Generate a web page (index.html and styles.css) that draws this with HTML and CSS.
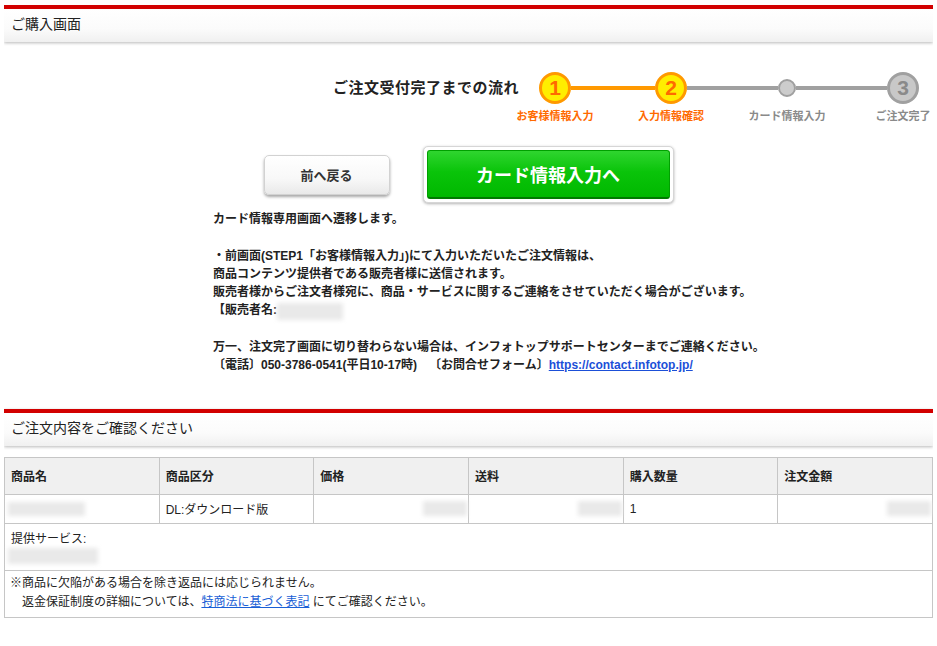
FILE: index.html
```html
<!DOCTYPE html>
<html lang="ja">
<head>
<meta charset="utf-8">
<title>ご購入画面</title>
<link rel="stylesheet" href="styles.css">
</head>
<body>
<section class="panel">
  <h2 class="panel-head">ご購入画面</h2>
  <div class="flow">
    <div class="flow-title">ご注文受付完了までの流れ</div>
    <div class="track">
      <div class="step active">
        <div class="mark"><span class="circle">1</span></div>
        <div class="label">お客様情報入力</div>
      </div>
      <div class="line line-on line-1"></div>
      <div class="step active">
        <div class="mark"><span class="circle">2</span></div>
        <div class="label">入力情報確認</div>
      </div>
      <div class="line line-2"></div>
      <div class="step step-dot">
        <div class="mark"><span class="dot"></span></div>
        <div class="label">カード情報入力</div>
      </div>
      <div class="line line-3"></div>
      <div class="step">
        <div class="mark"><span class="circle">3</span></div>
        <div class="label">ご注文完了</div>
      </div>
    </div>
  </div>

  <div class="actions">
    <button class="btn-back" type="button">前へ戻る</button>
    <button class="btn-go" type="button"><span class="btn-go-inner">カード情報入力へ</span></button>
  </div>

  <div class="notice">
    <p>カード情報専用画面へ遷移します。</p>
    <p>・前画面(STEP1「お客様情報入力」)にて入力いただいたご注文情報は、<br>商品コンテンツ提供者である販売者様に送信されます。<br>販売者様からご注文者様宛に、商品・サービスに関するご連絡をさせていただく場合がございます。<br>【販売者名:<span class="blur blur-seller"></span></p>
    <p>万一、注文完了画面に切り替わらない場合は、インフォトップサポートセンターまでご連絡ください。<br>〔電話〕050-3786-0541(平日10-17時)　<span class="form-label">〔お問合せフォーム〕</span><a class="notice-link" href="#">https://contact.infotop.jp/</a></p>
  </div>
</section>

<section class="panel panel-order">
  <h2 class="panel-head">ご注文内容をご確認ください</h2>
  <table class="order">
    <thead>
      <tr>
        <th>商品名</th>
        <th>商品区分</th>
        <th>価格</th>
        <th>送料</th>
        <th>購入数量</th>
        <th>注文金額</th>
      </tr>
    </thead>
    <tbody>
      <tr class="item-row">
        <td><span class="blur blur-name"></span></td>
        <td>DL:ダウンロード版</td>
        <td class="num-cell"><span class="blur blur-price"></span></td>
        <td class="num-cell"><span class="blur blur-ship"></span></td>
        <td>1</td>
        <td class="num-cell"><span class="blur blur-total"></span></td>
      </tr>
      <tr class="service-row">
        <td colspan="6">提供サービス:<span class="blur blur-service"></span></td>
      </tr>
      <tr class="note-row">
        <td colspan="6">※商品に欠陥がある場合を除き返品には応じられません。<br>　返金保証制度の詳細については、<a class="law-link" href="#">特商法に基づく表記</a> にてご確認ください。</td>
      </tr>
    </tbody>
  </table>
</section>
</body>
</html>
```

FILE: styles.css
```css
* {
  box-sizing: border-box;
}

html, body {
  background: #ffffff;
}

body {
  margin: 5px 4px 0 4px;
  font-family: "Liberation Sans", "Noto Sans CJK JP", sans-serif;
  color: #222222;
  font-size: 12px;
}

.panel-head {
  margin: 0;
  height: 37px;
  border-top: 4px solid #d20000;
  background: linear-gradient(#ffffff 0%, #fbfbfb 60%, #f0f0f0 100%);
  box-shadow: 0 1px 3px rgba(0, 0, 0, 0.28);
  padding: 0 0 0 7px;
  font-size: 14px;
  font-weight: normal;
  line-height: 31px;
  color: #222222;
}

/* flow */
.flow {
  display: flex;
  justify-content: flex-end;
  align-items: flex-start;
  gap: 20px;
  margin-top: 30px;
  padding-right: 14px;
}

.flow-title {
  font-size: 15px;
  font-weight: bold;
  line-height: 32px;
  letter-spacing: 0.5px;
  color: #222222;
  white-space: nowrap;
}

.track {
  display: flex;
  align-items: flex-start;
}

.step {
  width: 32px;
  display: flex;
  flex-direction: column;
  align-items: center;
}

.step-dot {
  width: 18px;
}

.mark {
  height: 32px;
  width: 100%;
  display: flex;
  align-items: center;
  justify-content: center;
}

.circle {
  width: 32px;
  height: 32px;
  border-radius: 50%;
  border: 3px solid #a0a0a0;
  background: #c8c8c8;
  color: #8a8a8a;
  font-family: "Liberation Sans", sans-serif;
  font-weight: bold;
  font-size: 21px;
  line-height: 26px;
  text-align: center;
  flex: none;
}

.active .circle {
  border-color: #ff9900;
  background: #ffee00;
  color: #ff6a00;
}

.dot {
  width: 18px;
  height: 18px;
  border-radius: 50%;
  border: 2px solid #a0a0a0;
  background: #cccccc;
  flex: none;
}

.label {
  margin-top: 4px;
  font-size: 11px;
  font-weight: bold;
  line-height: 16px;
  white-space: nowrap;
  color: #8a8a8a;
}

.active .label {
  color: #ff6a00;
}

.line {
  height: 4px;
  margin-top: 14px;
  background: #a0a0a0;
  flex: none;
}

.line-on {
  background: #ff9900;
}

.line-1 { width: 84px; }
.line-2 { width: 91px; }
.line-3 { width: 91px; }

/* actions */
.actions {
  display: flex;
  justify-content: center;
  align-items: center;
  gap: 33px;
  margin-top: 22px;
}

.btn-back {
  width: 126px;
  height: 40px;
  border: 1px solid #d2d2d2;
  border-radius: 5px;
  background: linear-gradient(#ffffff 0%, #f8f8f8 60%, #e9e9e9 100%);
  box-shadow: 0 2px 3px rgba(0, 0, 0, 0.35);
  font-family: "Liberation Sans", "Noto Sans CJK JP", sans-serif;
  font-size: 13px;
  font-weight: bold;
  color: #333333;
  padding: 0;
}

.btn-go {
  width: 251px;
  height: 57px;
  padding: 3px;
  border: 1px solid #d6d6d6;
  border-radius: 5px;
  background: #ffffff;
  box-shadow: 0 1px 3px rgba(0, 0, 0, 0.3);
  font-family: "Liberation Sans", "Noto Sans CJK JP", sans-serif;
}

.btn-go-inner {
  display: flex;
  align-items: center;
  justify-content: center;
  height: 100%;
  border-radius: 3px;
  border: 1px solid #00a000;
  border-bottom: 2px solid #007a00;
  background: linear-gradient(#2fd52f 0%, #0ac40a 45%, #00b800 100%);
  color: #ffffff;
  font-size: 18px;
  font-weight: bold;
}

/* notice */
.notice {
  margin-top: 7px;
  padding-left: 209px;
  font-size: 12px;
  font-weight: bold;
  line-height: 18.3px;
  color: #222222;
}

.notice p {
  margin: 0 0 18.3px 0;
}

.notice p:last-child {
  margin-bottom: 0;
}

.form-label {
  margin-left: 6px;
}

.notice-link {
  color: #1b4fd8;
  text-decoration: underline;
}

.blur {
  display: inline-block;
  background: #e9e9e9;
  filter: blur(2px);
  vertical-align: middle;
}

.blur-seller {
  width: 66px;
  height: 17px;
  margin-left: 0;
}

/* order section */
.panel-order {
  margin-top: 34px;
}

.order {
  margin-top: 11px;
  width: 100%;
  border-collapse: collapse;
  table-layout: fixed;
  font-size: 12px;
  color: #222222;
}

.order th,
.order td {
  border: 1px solid #c6c6c6;
  padding: 0 6px;
  text-align: left;
  vertical-align: middle;
}

.order th {
  height: 37px;
  background: #f0f0f0;
  font-weight: bold;
}

.item-row td {
  height: 29px;
}

.order td.num-cell {
  text-align: right;
  padding-right: 1px;
}

.blur-name {
  display: block;
  width: 77px;
  height: 14px;
  margin-left: -3px;
}

.blur-price,
.blur-ship,
.blur-total {
  width: 44px;
  height: 15px;
}

.service-row td {
  height: 47px;
  padding-top: 6px;
  padding-bottom: 4px;
  line-height: 18px;
  vertical-align: top;
}

.blur-service {
  display: block;
  width: 90px;
  height: 16px;
  margin-left: -3px;
}

.note-row td {
  height: 47px;
  padding-top: 3px;
  line-height: 19px;
  vertical-align: top;
  padding-left: 5px;
}

.law-link {
  color: #1a5fd6;
  text-decoration: underline;
}
```
